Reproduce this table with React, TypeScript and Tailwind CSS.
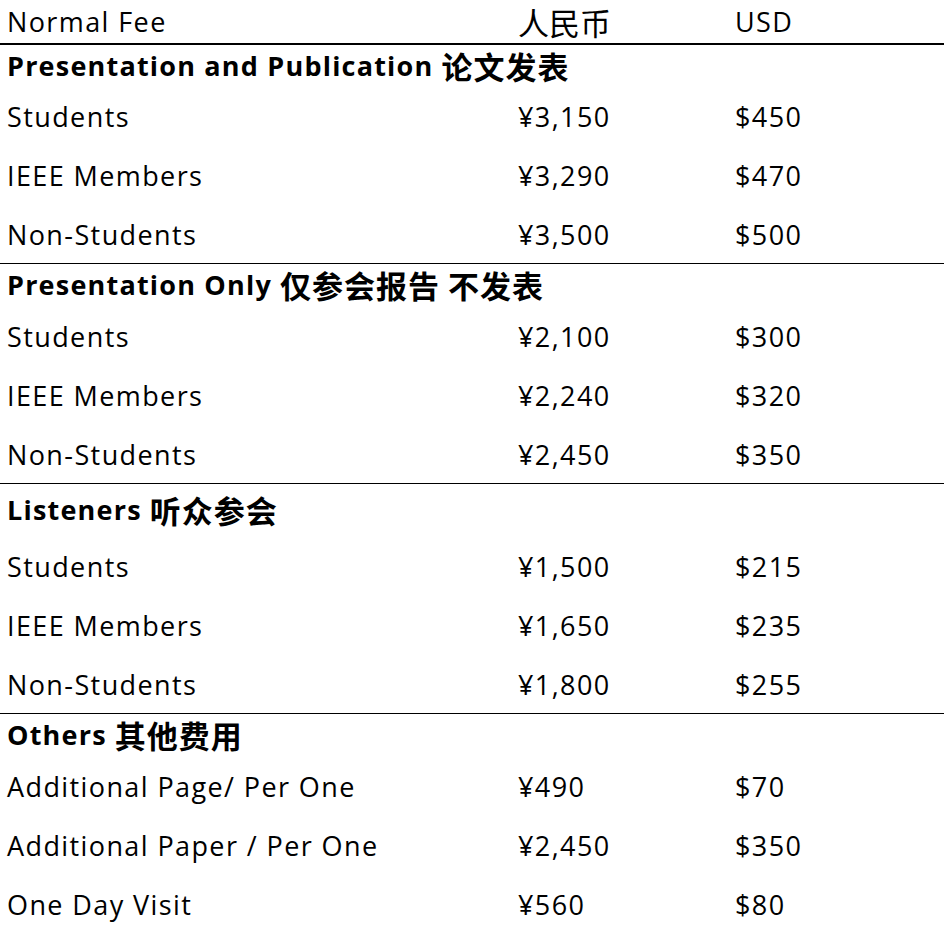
const font = "font-['Open_Sans','Noto_Sans_CJK_SC',sans-serif]"
const cjk = "font-['Noto_Sans_CJK_SC',sans-serif] text-[31px] leading-[36px]"

type Row = { label: string; cny: string; usd: string }
type Section = { en: string; zh: string; headerHeight: string; rows: Row[] }

const sections: Section[] = [
  {
    en: 'Presentation and Publication',
    zh: '论文发表',
    headerHeight: 'h-[41px]',
    rows: [
      { label: 'Students', cny: '¥3,150', usd: '$450' },
      { label: 'IEEE Members', cny: '¥3,290', usd: '$470' },
      { label: 'Non-Students', cny: '¥3,500', usd: '$500' },
    ],
  },
  {
    en: 'Presentation Only',
    zh: '仅参会报告 不发表',
    headerHeight: 'h-[42px]',
    rows: [
      { label: 'Students', cny: '¥2,100', usd: '$300' },
      { label: 'IEEE Members', cny: '¥2,240', usd: '$320' },
      { label: 'Non-Students', cny: '¥2,450', usd: '$350' },
    ],
  },
  {
    en: 'Listeners',
    zh: '听众参会',
    headerHeight: 'h-[52px]',
    rows: [
      { label: 'Students', cny: '¥1,500', usd: '$215' },
      { label: 'IEEE Members', cny: '¥1,650', usd: '$235' },
      { label: 'Non-Students', cny: '¥1,800', usd: '$255' },
    ],
  },
  {
    en: 'Others',
    zh: '其他费用',
    headerHeight: 'h-[42px]',
    rows: [
      { label: 'Additional Page/ Per One', cny: '¥490', usd: '$70' },
      { label: 'Additional Paper / Per One', cny: '¥2,450', usd: '$350' },
      { label: 'One Day Visit', cny: '¥560', usd: '$80' },
    ],
  },
]

function FeeRow({ row }: { row: Row }) {
  return (
    <div className="flex h-[59px] items-center pt-[3px] text-[27px] leading-[32px] tracking-[1.4px]">
      <span className="w-[518px] shrink-0 pl-[7px]">{row.label}</span>
      <span className="w-[217px] shrink-0">{row.cny}</span>
      <span>{row.usd}</span>
    </div>
  )
}

export default function App() {
  return (
    <div className={`${font} w-[944px] bg-white text-black`}>
      <div className="flex h-[45px] items-center border-b-2 border-black pt-[1px] text-[27px] leading-[32px] tracking-[1.4px]">
        <span className="w-[518px] shrink-0 pl-[7px]">Normal Fee</span>
        <span className={`w-[217px] shrink-0 tracking-normal ${cjk}`}>人民币</span>
        <span>USD</span>
      </div>
      {sections.map((section, i) => (
        <div key={section.en} className={i > 0 ? 'border-t border-black' : ''}>
          <div
            className={`${section.headerHeight} flex items-center gap-[8px] pl-[7px] text-[27px] font-bold leading-[32px] tracking-[1.2px]`}
          >
            <span>{section.en}</span>
            <span className={`tracking-[1px] ${cjk}`}>{section.zh}</span>
          </div>
          {section.rows.map((row) => (
            <FeeRow key={row.label} row={row} />
          ))}
        </div>
      ))}
    </div>
  )
}
